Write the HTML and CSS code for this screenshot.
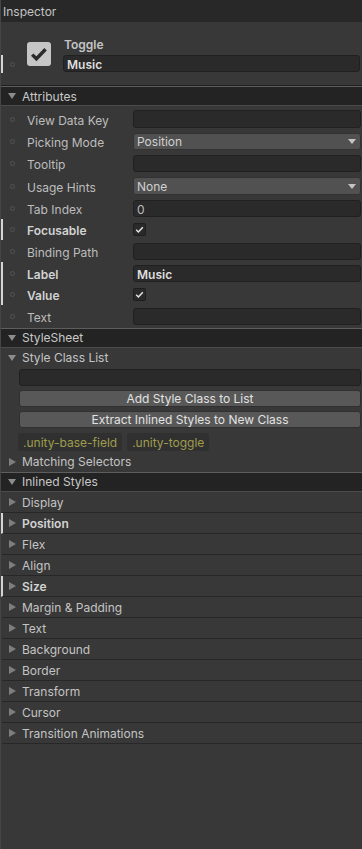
FILE: index.html
```html
<!DOCTYPE html>
<html lang="en">
<head>
<meta charset="UTF-8">
<title>Inspector</title>
<link rel="stylesheet" href="styles.css">
</head>
<body>
<div class="inspector">
    <div class="title">Inspector</div>

    <div class="elem">
        <div class="elem-mark"><span class="dot"></span></div>
        <div class="big-check">
            <svg width="24" height="24" viewBox="0 0 24 24"><path d="M5.2 12.6 L9.4 16.8 L18.6 7.2" fill="none" stroke="#2b2b2b" stroke-width="3.4" stroke-linejoin="miter"/></svg>
        </div>
        <div class="elem-main">
            <div class="elem-type">Toggle</div>
            <div class="input bold">Music</div>
        </div>
    </div>

    <div class="section-head"><span class="arrow down"></span>Attributes</div>
    <div class="fields">
        <div class="row"><span class="dot"></span><span class="lbl">View Data Key</span><div class="input"></div></div>
        <div class="row"><span class="dot"></span><span class="lbl">Picking Mode</span><div class="select">Position<span class="caret"></span></div></div>
        <div class="row"><span class="dot"></span><span class="lbl">Tooltip</span><div class="input"></div></div>
        <div class="row"><span class="dot"></span><span class="lbl">Usage Hints</span><div class="select">None<span class="caret"></span></div></div>
        <div class="row"><span class="dot"></span><span class="lbl">Tab Index</span><div class="input">0</div></div>
        <div class="row check-row set"><span class="dot"></span><span class="lbl">Focusable</span><div class="check"><svg width="13" height="13" viewBox="0 0 13 13"><path d="M3.2 6.8 L5.4 9 L9.8 4.2" fill="none" stroke="#e6e6e6" stroke-width="1.5"/></svg></div></div>
        <div class="row"><span class="dot"></span><span class="lbl">Binding Path</span><div class="input"></div></div>
        <div class="row set"><span class="dot"></span><span class="lbl">Label</span><div class="input bold">Music</div></div>
        <div class="row check-row set"><span class="dot"></span><span class="lbl">Value</span><div class="check"><svg width="13" height="13" viewBox="0 0 13 13"><path d="M3.2 6.8 L5.4 9 L9.8 4.2" fill="none" stroke="#e6e6e6" stroke-width="1.5"/></svg></div></div>
        <div class="row"><span class="dot"></span><span class="lbl">Text</span><div class="input"></div></div>
    </div>

    <div class="section-head"><span class="arrow down"></span>StyleSheet</div>
    <div class="fold open"><span class="arrow down"></span>Style Class List</div>
    <div class="class-list">
        <div class="input"></div>
        <div class="btn">Add Style Class to List</div>
        <div class="btn">Extract Inlined Styles to New Class</div>
        <div class="tags">
            <span class="tag">.unity-base-field</span>
            <span class="tag">.unity-toggle</span>
        </div>
    </div>
    <div class="fold"><span class="arrow right"></span>Matching Selectors</div>

    <div class="section-head"><span class="arrow down"></span>Inlined Styles</div>
    <div class="styles">
        <div class="style-row"><span class="arrow right"></span>Display</div>
        <div class="style-row set"><span class="arrow right"></span>Position</div>
        <div class="style-row"><span class="arrow right"></span>Flex</div>
        <div class="style-row"><span class="arrow right"></span>Align</div>
        <div class="style-row set"><span class="arrow right"></span>Size</div>
        <div class="style-row"><span class="arrow right"></span>Margin &amp; Padding</div>
        <div class="style-row"><span class="arrow right"></span>Text</div>
        <div class="style-row"><span class="arrow right"></span>Background</div>
        <div class="style-row"><span class="arrow right"></span>Border</div>
        <div class="style-row"><span class="arrow right"></span>Transform</div>
        <div class="style-row"><span class="arrow right"></span>Cursor</div>
        <div class="style-row"><span class="arrow right"></span>Transition Animations</div>
    </div>
</div>
</body>
</html>
```

FILE: styles.css
```css
html,body{
    margin:0;
    padding:0;
    background:#383838;
}
body{
    font-family:Inter,"Noto Sans",sans-serif;
    font-size:12px;
    color:#c4c4c4;
}
.inspector{
    min-height:849px;
    border-left:1px solid #454545;
    box-sizing:border-box;
}
.title{
    height:22px;
    line-height:24px;
    background:#282828;
    padding-left:2px;
    color:#c4c4c4;
}

/* element header */
.elem{
    display:flex;
    align-items:flex-start;
    height:64px;
    border-bottom:1px solid #1f1f1f;
    box-sizing:border-box;
}
.elem-mark{
    margin-top:33px;
    height:18px;
    width:14px;
    border-left:2px solid #d4d4d4;
    display:flex;
    align-items:center;
}
.elem-mark .dot{margin-left:7px;}
.big-check{
    margin-top:20px;
    margin-left:10px;
    width:24px;
    height:24px;
    background:#c6c6c6;
    border-radius:3px;
}
.big-check svg{display:block;}
.elem-main{
    flex:1;
    margin-left:12px;
    margin-right:1px;
    margin-top:13px;
}
.elem-type{
    line-height:20px;
    font-weight:600;
    padding-left:1px;
}

.dot{
    width:5px;
    height:5px;
    border:1px solid #545454;
    border-radius:50%;
    box-sizing:border-box;
    flex:none;
}

/* section headers */
.section-head{
    height:20px;
    background:#232323;
    border-top:1px solid #5e5e5e;
    border-bottom:1px solid #4b4b4b;
    box-sizing:border-box;
    display:flex;
    align-items:center;
    color:#c8c8c8;
}
.arrow{display:inline-block;flex:none;}
.arrow.down{
    border-left:4px solid transparent;
    border-right:4px solid transparent;
    border-top:6px solid #8c8c8c;
    margin-left:7px;
    margin-right:6px;
}
.arrow.right{
    border-top:4px solid transparent;
    border-bottom:4px solid transparent;
    border-left:7px solid #7e7e7e;
    margin-left:8px;
    margin-right:6px;
}

/* attribute fields */
.fields{padding-top:2px;padding-bottom:0;}
.row{
    height:22.3px;
    display:flex;
    align-items:center;
    border-left:2px solid transparent;
}
.row .dot{margin-left:7px;}
.row.check-row{height:20.6px;}
.row.set{border-left-color:#d4d4d4;}
.row.set .lbl{font-weight:600;color:#d2d2d2;}
.lbl{
    width:106px;
    margin-left:12px;
    padding-top:2px;
    flex:none;
    color:#bdbdbd;
}
.input{
    flex:1;
    height:17.4px;
    line-height:17px;
    background:#2a2a2a;
    border:1px solid #202020;
    border-radius:3px;
    box-sizing:border-box;
    padding-left:3px;
    margin-right:1px;
    color:#bdbdbd;
}
.input.bold{font-weight:600;color:#dedede;}
.select{
    flex:1;
    height:17.4px;
    line-height:17px;
    background:#515151;
    border:1px solid #333;
    border-radius:3px;
    box-sizing:border-box;
    padding-left:3px;
    padding-right:4px;
    margin-right:1px;
    color:#d0d0d0;
    display:flex;
    justify-content:space-between;
    align-items:center;
}
.caret{
    border-left:4px solid transparent;
    border-right:4px solid transparent;
    border-top:5px solid #c4c4c4;
}
.check{
    width:13px;
    height:13px;
    background:#2a2a2a;
    border:1px solid #1e1e1e;
    border-radius:2px;
    box-sizing:border-box;
}
.check svg{display:block;margin:-1px;}

/* stylesheet */
.fold{
    height:20px;
    display:flex;
    align-items:center;
    color:#c4c4c4;
}
.class-list{
    display:flex;
    flex-direction:column;
    gap:4px;
    padding:1px 1px 1px 17px;
}
.class-list .input{flex:none;margin-right:0;margin-left:0.5px;}
.btn{
    height:17px;
    line-height:16px;
    background:#585858;
    border:1px solid #303030;
    border-radius:3px;
    box-sizing:border-box;
    text-align:center;
    color:#e2e2e2;
    margin-left:1px;
}
.tags{display:flex;gap:5px;margin-top:1px;}
.tag{
    height:18px;
    line-height:19px;
    padding:0 5px;
    background:#303030;
    border-radius:3px;
    color:#9f9c4e;
}

/* inlined styles */
.style-row{
    height:21px;
    display:flex;
    align-items:center;
    padding-top:2px;
    border-bottom:1px solid #272727;
    border-left:2px solid transparent;
    box-sizing:border-box;
    color:#c4c4c4;
}
.style-row .arrow.right{margin-left:6px;margin-top:-1px;}
.style-row.set{border-left-color:#d4d4d4;font-weight:600;color:#d2d2d2;}
```
